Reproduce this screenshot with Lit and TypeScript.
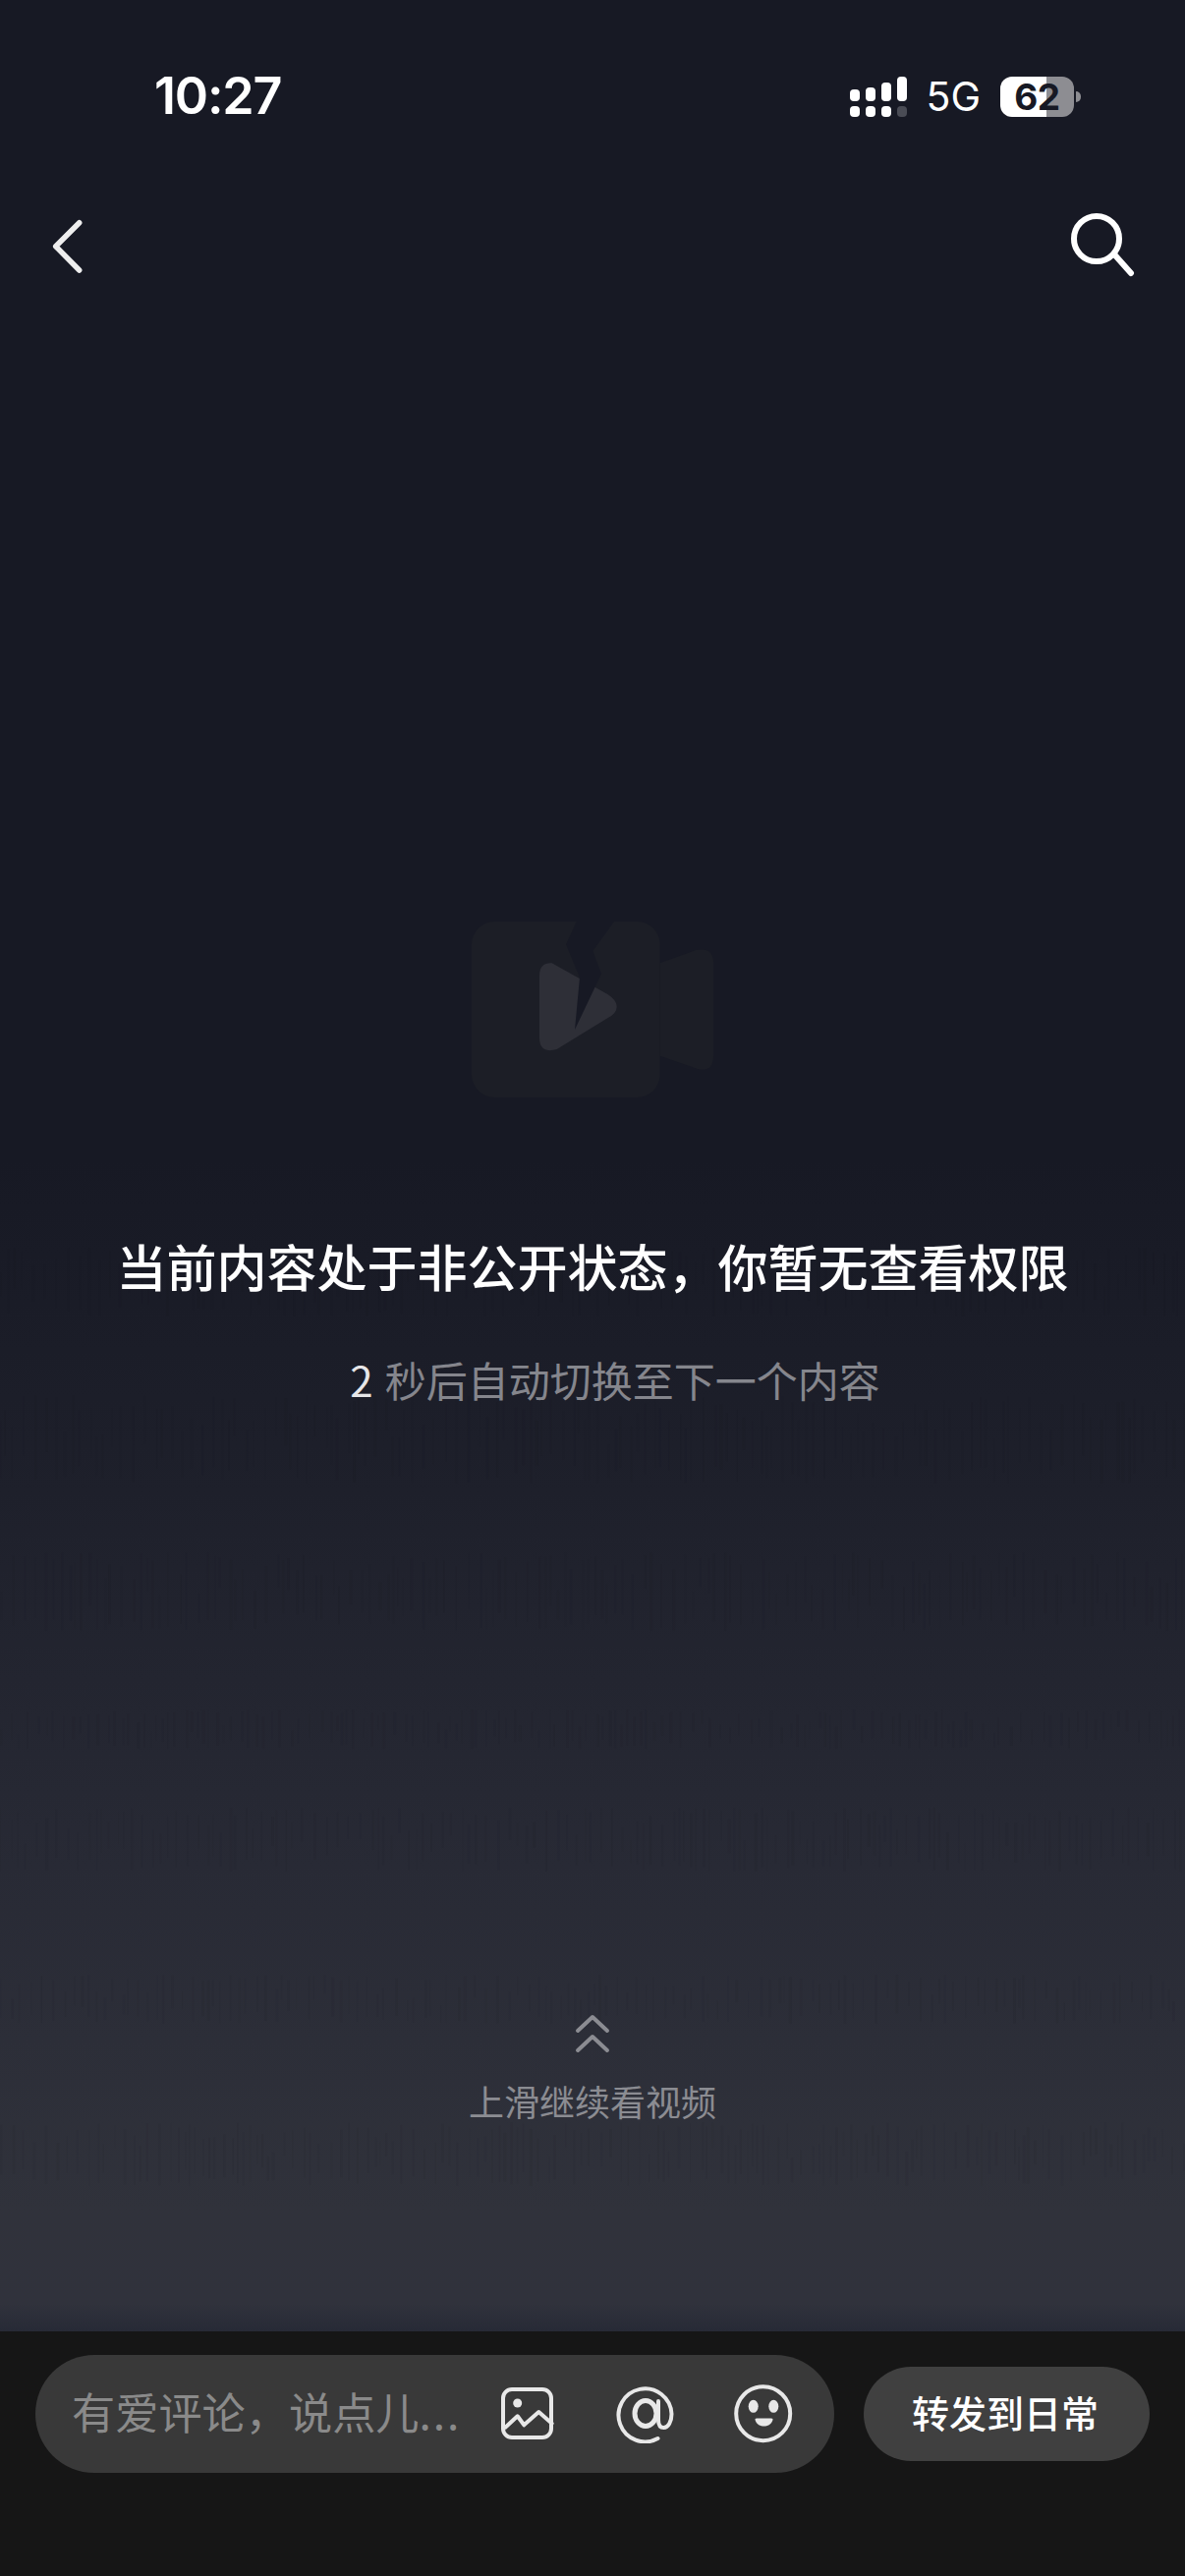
import { LitElement, html, css, svg } from 'lit';
import { customElement } from 'lit/decorators.js';

const CJK = css`"Noto Sans CJK SC", "Noto Sans", sans-serif`;

// bands of faint vertical streaks in the lower half of the background
const BANDS = [
  [1270, 70],
  [1420, 90],
  [1580, 80],
  [1740, 40],
  [1840, 65],
  [2010, 50],
  [2160, 65],
];

function streaks() {
  let seed = 27;
  const rand = () => {
    seed = (seed * 16807) % 2147483647;
    return seed / 2147483647;
  };
  const out = [];
  for (const [top, height] of BANDS) {
    for (let x = 0; x < 1206; x += 4 + rand() * 9) {
      const h = height * (0.35 + rand() * 0.65);
      const y = top + rand() * (height - h);
      const w = 1 + rand() * 2;
      const o = 0.02 + rand() * 0.04;
      out.push(svg`<rect x=${x.toFixed(1)} y=${y.toFixed(1)} width=${w.toFixed(1)} height=${h.toFixed(1)} opacity=${o.toFixed(3)} />`);
    }
  }
  return out;
}

@customElement('app-root')
export class AppRoot extends LitElement {
  static styles = css`
    :host {
      display: block;
      width: 1206px;
      height: 2622px;
      font-family: ${CJK};
    }

    .screen {
      display: flex;
      flex-direction: column;
      height: 2622px;
      overflow: hidden;
    }

    .main {
      position: relative;
      flex: 1;
      display: flex;
      flex-direction: column;
      align-items: stretch;
      padding: 72px 0 210px;
      box-sizing: border-box;
      background: linear-gradient(180deg, #171924 0, #171924 1180px, #1e202b 1520px, #282a35 1900px, #30323b 2250px, #30323c 2345px, #272a36 2373px);
    }

    .texture {
      position: absolute;
      top: 0;
      left: 0;
      width: 1206px;
      height: 2373px;
      fill: #0c0a14;
      pointer-events: none;
    }

    .status,
    .nav,
    .center,
    .hint {
      position: relative;
    }

    .status {
      display: flex;
      align-items: center;
      height: 52px;
      padding: 0 106px 0 157px;
      color: #fff;
      font-family: Inter, sans-serif;
    }

    .time {
      font-size: 52px;
      font-weight: 600;
      line-height: 52px;
      letter-spacing: -1.2px;
    }

    .indicators {
      margin-left: auto;
      display: flex;
      align-items: center;
    }

    .signal {
      display: block;
      width: 58px;
      height: 41px;
    }

    .net {
      margin: 0 20px 0 19px;
      font-size: 41px;
      line-height: 41px;
      font-weight: 400;
    }

    .battery {
      width: 75px;
      height: 41px;
      border-radius: 12px;
      background: linear-gradient(90deg, #fff 0 47px, #8d8d92 47px);
      color: #171924;
      font-size: 37px;
      font-weight: 700;
      line-height: 41px;
      text-align: center;
      letter-spacing: -0.5px;
    }

    .nub {
      width: 5px;
      height: 11px;
      margin-left: 2px;
      border-radius: 0 6px 6px 0;
      background: #8d8d92;
    }

    .nav {
      display: flex;
      align-items: center;
      justify-content: space-between;
      height: 70px;
      margin-top: 89px;
      padding: 0 51px 0 50px;
    }

    .back {
      display: block;
      width: 40px;
      height: 64px;
    }

    .search {
      display: block;
      width: 70px;
      height: 70px;
    }

    .center {
      display: flex;
      flex-direction: column;
      align-items: center;
      margin-top: 655px;
    }

    .camera {
      display: block;
      width: 246px;
      height: 179px;
    }

    .title {
      margin-top: 136px;
      color: #fff;
      font-size: 51px;
      font-weight: 500;
      line-height: 70px;
      white-space: nowrap;
    }

    .sub {
      margin-top: 51px;
      margin-left: 46px;
      color: #85868d;
      font-size: 42px;
      line-height: 60px;
      white-space: nowrap;
    }

    .sub .count {
      margin-right: 3px;
      color: #e6e6e8;
    }

    .hint {
      margin-top: auto;
      display: flex;
      flex-direction: column;
      align-items: center;
    }

    .chevrons {
      display: block;
      width: 40px;
      height: 44px;
    }

    .hint-text {
      margin-top: 20px;
      color: #8b8c92;
      font-size: 36px;
      line-height: 50px;
    }

    .footer {
      height: 249px;
      box-sizing: border-box;
      padding: 24px 36px 0;
      background: #161616;
      display: flex;
      align-items: flex-start;
      gap: 30px;
    }

    .input {
      width: 813px;
      height: 120px;
      box-sizing: border-box;
      padding: 0 42px 0 37px;
      border-radius: 60px;
      background: #393939;
      display: flex;
      align-items: center;
    }

    .placeholder {
      flex: 1;
      padding-bottom: 6px;
      color: #8a8a8a;
      font-size: 44.2px;
      line-height: 60px;
      white-space: nowrap;
    }

    .dots {
      letter-spacing: 2px;
    }

    .icons {
      display: flex;
      gap: 60px;
    }

    .icons svg {
      display: block;
      width: 60px;
      height: 60px;
    }

    .share {
      width: 291px;
      height: 96px;
      margin-top: 12px;
      box-sizing: border-box;
      padding: 0 3px 6px 0;
      border-radius: 48px;
      background: #404040;
      color: #fff;
      font-size: 38px;
      font-weight: 500;
      display: flex;
      align-items: center;
      justify-content: center;
    }
  `;

  render() {
    return html`
      <div class="screen">
        <div class="main">
          <svg class="texture" viewBox="0 0 1206 2373">${streaks()}</svg>

          <div class="status">
            <span class="time">10:27</span>
            <div class="indicators">
              <svg class="signal" viewBox="0 0 58 41" fill="#fff">
                <rect x="0" y="13" width="10" height="12" rx="4" />
                <rect x="16" y="11" width="10" height="14" rx="4" />
                <rect x="32" y="6" width="10" height="19" rx="4" />
                <rect x="48" y="0" width="10" height="25" rx="4" />
                <rect x="0" y="30" width="10" height="11" rx="4" />
                <rect x="16" y="30" width="10" height="11" rx="4" />
                <rect x="32" y="30" width="10" height="11" rx="4" />
                <rect x="48" y="30" width="10" height="11" rx="4" fill="#4a4c55" />
              </svg>
              <span class="net">5G</span>
              <div class="battery">62</div>
              <div class="nub"></div>
            </div>
          </div>

          <div class="nav">
            <svg class="back" viewBox="0 0 40 64" fill="none" stroke="#eee" stroke-width="5.5" stroke-linecap="round" stroke-linejoin="round">
              <path d="M30.7 10.7 L6.7 34.7 L30.7 59" />
            </svg>
            <svg class="search" viewBox="0 0 70 70" fill="none" stroke="#fff" stroke-width="6" stroke-linecap="round">
              <circle cx="31" cy="30" r="23" />
              <path d="M50 47 L66 65" />
            </svg>
          </div>

          <div class="center">
            <svg class="camera" viewBox="0 0 738 537">
              <rect width="575" height="537" rx="70" fill="#1c1e26" />
              <path d="M575 127 L685 87 Q738 78 738 125 L738 410 Q738 460 690 450 L575 410 Z" fill="#1c1e26" />
              <path d="M207 165 Q207 125 245 127 L415 222 Q443 240 443 260 Q443 280 415 295 L260 390 Q207 405 207 355 Z" fill="#2e2f37" />
              <path d="M320 0 L288 70 L330 170 L315 330 L396 160 L370 90 L435 0 Z" fill="#171924" />
            </svg>
            <div class="title">当前内容处于非公开状态，你暂无查看权限</div>
            <div class="sub"><span class="count">2</span> 秒后自动切换至下一个内容</div>
          </div>

          <div class="hint">
            <svg class="chevrons" viewBox="0 0 40 44" fill="none" stroke="#8b8c92" stroke-width="4" stroke-linecap="round" stroke-linejoin="round">
              <path d="M5 18 L20 4 L35 18" />
              <path d="M5 38 L20 24 L35 38" />
            </svg>
            <div class="hint-text">上滑继续看视频</div>
          </div>
        </div>

        <div class="footer">
          <div class="input">
            <span class="placeholder">有爱评论，说点儿<span class="dots">...</span></span>
            <div class="icons">
              <svg viewBox="0 0 60 60" fill="none" stroke="#e8e8e8" stroke-width="4" stroke-linecap="round" stroke-linejoin="round">
                <rect x="5" y="5" width="49" height="49" rx="9" />
                <circle cx="19.7" cy="19" r="4.5" fill="#e8e8e8" stroke="none" />
                <path d="M7.3 43.7 L19.7 32.3 L26.3 41.3 L41.3 28 L54.7 39.7" />
              </svg>
              <svg viewBox="0 0 60 60" fill="none" stroke="#e8e8e8" stroke-width="4" stroke-linecap="round">
                <path d="M42.5 55 A27 27 0 1 1 56.5 30 C56.5 38 53 44 48.5 44 C45 44 43 41 43 36 V17" />
                <ellipse cx="30" cy="29.5" rx="11" ry="13" stroke-width="5" />
              </svg>
              <svg viewBox="0 0 60 60" fill="none" stroke="#e8e8e8" stroke-width="4">
                <circle cx="29.7" cy="29.7" r="27.5" />
                <ellipse cx="19.7" cy="22.3" rx="5" ry="6.5" fill="#e8e8e8" stroke="none" />
                <ellipse cx="40.3" cy="22.3" rx="5" ry="6.5" fill="#e8e8e8" stroke="none" />
                <path d="M21.5 36 Q21 34.5 23 34.5 H38 Q40 34.5 39.5 36 C38 41 34 42.5 30.5 42.5 C27 42.5 23 41 21.5 36 Z" fill="#e8e8e8" stroke="none" />
              </svg>
            </div>
          </div>
          <div class="share">转发到日常</div>
        </div>
      </div>
    `;
  }
}
